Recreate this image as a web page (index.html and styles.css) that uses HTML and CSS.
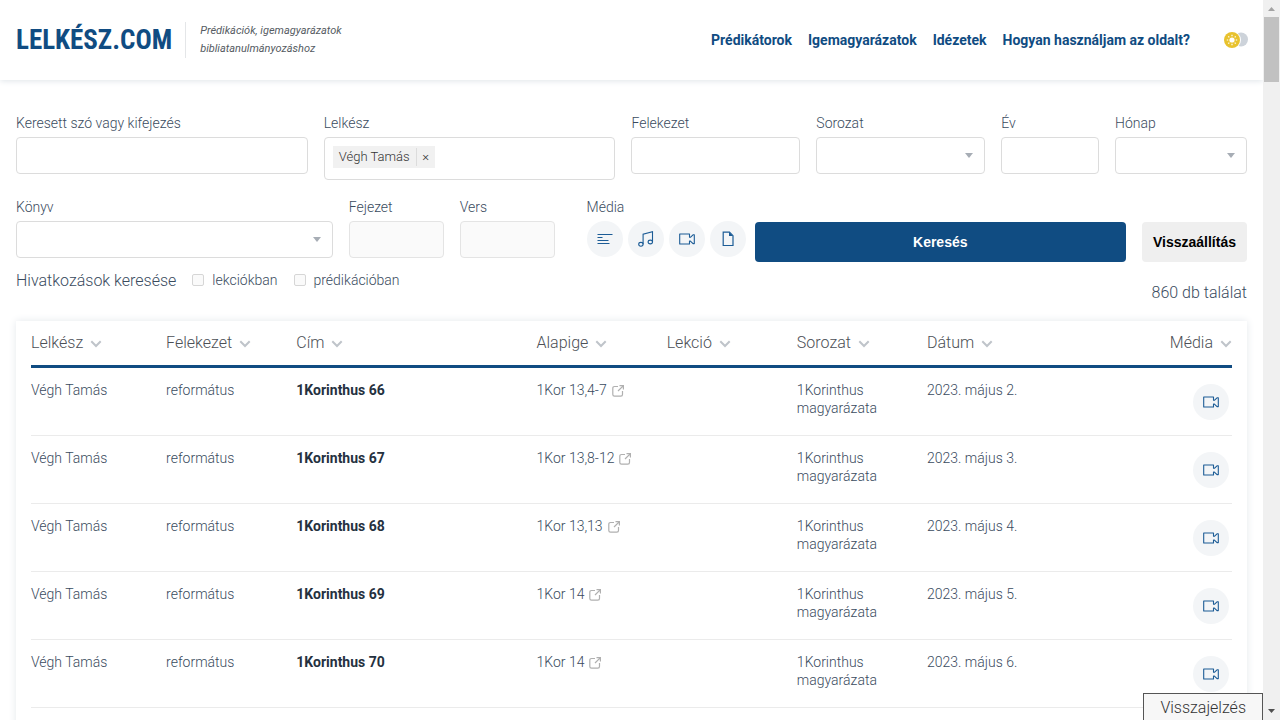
FILE: index.html
```html
<!DOCTYPE html>
<html lang="hu">
<head>
<meta charset="utf-8">
<meta name="viewport" content="width=device-width, initial-scale=1">
<title>Lelkész.com</title>
<link rel="stylesheet" href="styles.css">
</head>
<body>
<svg class="sprite" aria-hidden="true">
  <symbol id="chevron" viewBox="0 0 12 8"><path d="M1.3 1.3 6 6l4.700-4.700" fill="none" stroke="currentColor" stroke-width="2"/></symbol>
  <symbol id="camera" viewBox="0 0 16 12"><path d="M.7 1h9.800v3.300h.9L14 1.800h1.300v8.800H14l-2.600-2.500h-.9V11H.7z" fill="none" stroke="currentColor" stroke-width="1.100" stroke-linejoin="round"/></symbol>
  <symbol id="external" viewBox="0 0 12 12"><path d="M6 1.500H2.500Q.8 1.500.8 3.200v6.300q0 1.700 1.700 1.700h6.300q1.700 0 1.700-1.700V6M7.500.6h3.900v3.900M11.200.8 6 6" fill="none" stroke="currentColor" stroke-width="1.200"/></symbol>
</svg>
<div class="window">
  <div class="page">
    <header class="header">
      <a class="logo" href="#">LELKÉSZ.COM</a>
      <p class="tagline">Prédikációk, igemagyarázatok<br>bibliatanulmányozáshoz</p>
      <nav class="nav">
        <a href="#">Prédikátorok</a>
        <a href="#">Igemagyarázatok</a>
        <a href="#">Idézetek</a>
        <a href="#">Hogyan használjam az oldalt?</a>
      </nav>
      <button class="theme" type="button" aria-label="Téma váltása">
        <svg width="24" height="16" viewBox="0 0 24 16">
          <circle cx="17" cy="7.500" r="7" fill="#cdd3da"/>
          <circle cx="8" cy="8" r="9" fill="#fff"/>
          <circle cx="8" cy="8" r="8" fill="#e8c22e"/>
          <circle cx="8" cy="8" r="2.600" fill="#fff"/>
          <path d="M8 2.800v1.400M8 11.800v1.400M2.800 8h1.400M11.800 8h1.400M4.300 4.300l1 1M10.700 10.700l1 1M11.700 4.300l-1 1M5.300 10.700l-1 1" stroke="#fff" stroke-width="1.200"/>
        </svg>
      </button>
    </header>

    <main class="main">
      <form class="search">
        <div class="fields">
          <div class="field"><label for="term">Keresett szó vagy kifejezés</label><input class="control" id="term" type="text"></div>
          <div class="field"><label for="pastor">Lelkész</label>
            <div class="tags">
              <span class="tag">Végh Tamás<button type="button" aria-label="Végh Tamás törlése">×</button></span>
              <input id="pastor" type="text">
            </div>
          </div>
          <div class="field"><label for="church">Felekezet</label><input class="control" id="church" type="text"></div>
          <div class="field"><label for="series">Sorozat</label><div class="select"><select class="control" id="series"><option></option></select></div></div>
          <div class="field"><label for="year">Év</label><input class="control" id="year" type="text"></div>
          <div class="field"><label for="month">Hónap</label><div class="select"><select class="control" id="month"><option></option></select></div></div>
        </div>

        <div class="second">
          <div class="passage">
            <div class="field"><label for="book">Könyv</label><div class="select"><select class="control" id="book"><option></option></select></div></div>
            <div class="field"><label for="chapter">Fejezet</label><input class="control" id="chapter" type="text" disabled></div>
            <div class="field"><label for="verse">Vers</label><input class="control" id="verse" type="text" disabled></div>
          </div>
          <div class="field" role="group" aria-labelledby="media-label">
            <span class="label" id="media-label">Média</span>
            <div class="media">
              <button class="round" type="button" aria-label="Szöveg"><svg width="16" height="12" viewBox="0 0 16 12"><path d="M.5 1.500h15M.5 4.500h5M.5 7.500h11M.5 10.500h12" stroke="currentColor" stroke-width="1.200"/></svg></button>
              <button class="round" type="button" aria-label="Hang"><svg width="16" height="16" viewBox="0 0 16 16"><g fill="none" stroke="currentColor" stroke-width="1.100"><ellipse cx="2.900" cy="13.300" rx="2.200" ry="1.900"/><ellipse cx="12.300" cy="11" rx="2.200" ry="1.900"/><path d="M5.100 13.300V3.200l9.400-2.500V11"/></g></svg></button>
              <button class="round" type="button" aria-label="Videó"><svg width="16" height="12"><use href="#camera"/></svg></button>
              <button class="round" type="button" aria-label="Dokumentum"><svg width="12" height="16" viewBox="0 0 12 16"><path d="M1.200 1.200h6.300L11 4.700v9.800H1.200z" fill="none" stroke="currentColor" stroke-width="1.200"/><path d="M7 1l4 4H7z" fill="currentColor"/></svg></button>
            </div>
          </div>
          <button class="submit" type="submit">Keresés</button>
          <button class="reset" type="reset">Visszaállítás</button>
        </div>

        <div class="third">
          <span class="refs">Hivatkozások keresése</span>
          <label class="check"><input type="checkbox" disabled>lekciókban</label>
          <label class="check"><input type="checkbox" disabled>prédikációban</label>
          <output class="count">860 db találat</output>
        </div>
      </form>

      <div class="card">
        <table>
          <colgroup><col class="c-pastor"><col class="c-narrow"><col class="c-title"><col class="c-narrow"><col class="c-narrow"><col class="c-narrow"><col class="c-narrow"><col></colgroup>
          <thead>
            <tr>
              <th>Lelkész<svg class="sort"><use href="#chevron"/></svg></th>
              <th>Felekezet<svg class="sort"><use href="#chevron"/></svg></th>
              <th>Cím<svg class="sort"><use href="#chevron"/></svg></th>
              <th>Alapige<svg class="sort"><use href="#chevron"/></svg></th>
              <th>Lekció<svg class="sort"><use href="#chevron"/></svg></th>
              <th>Sorozat<svg class="sort"><use href="#chevron"/></svg></th>
              <th>Dátum<svg class="sort"><use href="#chevron"/></svg></th>
              <th>Média<svg class="sort"><use href="#chevron"/></svg></th>
            </tr>
          </thead>
          <tbody>
            <tr><td>Végh Tamás</td><td>református</td><td><a class="title" href="#">1Korinthus 66</a></td><td><a href="#">1Kor 13,4-7<svg class="ext"><use href="#external"/></svg></a></td><td></td><td>1Korinthus magyarázata</td><td>2023. május 2.</td><td><button class="round" type="button" aria-label="Videó"><svg width="16" height="12"><use href="#camera"/></svg></button></td></tr>
            <tr><td>Végh Tamás</td><td>református</td><td><a class="title" href="#">1Korinthus 67</a></td><td><a href="#">1Kor 13,8-12<svg class="ext"><use href="#external"/></svg></a></td><td></td><td>1Korinthus magyarázata</td><td>2023. május 3.</td><td><button class="round" type="button" aria-label="Videó"><svg width="16" height="12"><use href="#camera"/></svg></button></td></tr>
            <tr><td>Végh Tamás</td><td>református</td><td><a class="title" href="#">1Korinthus 68</a></td><td><a href="#">1Kor 13,13<svg class="ext"><use href="#external"/></svg></a></td><td></td><td>1Korinthus magyarázata</td><td>2023. május 4.</td><td><button class="round" type="button" aria-label="Videó"><svg width="16" height="12"><use href="#camera"/></svg></button></td></tr>
            <tr><td>Végh Tamás</td><td>református</td><td><a class="title" href="#">1Korinthus 69</a></td><td><a href="#">1Kor 14<svg class="ext"><use href="#external"/></svg></a></td><td></td><td>1Korinthus magyarázata</td><td>2023. május 5.</td><td><button class="round" type="button" aria-label="Videó"><svg width="16" height="12"><use href="#camera"/></svg></button></td></tr>
            <tr><td>Végh Tamás</td><td>református</td><td><a class="title" href="#">1Korinthus 70</a></td><td><a href="#">1Kor 14<svg class="ext"><use href="#external"/></svg></a></td><td></td><td>1Korinthus magyarázata</td><td>2023. május 6.</td><td><button class="round" type="button" aria-label="Videó"><svg width="16" height="12"><use href="#camera"/></svg></button></td></tr>
          </tbody>
        </table>
      </div>
    </main>
    <button class="feedback" type="button">Visszajelzés</button>
  </div>
  <div class="scrollbar" aria-hidden="true">
    <svg width="17" height="17" viewBox="0 0 17 17"><path d="M5 11l3.500-4 3.500 4z" fill="#a3a3a3"/></svg>
    <div class="thumb"></div>
    <svg class="down" width="17" height="17" viewBox="0 0 17 17"><path d="M5 6l3.500 4L12 6z" fill="#505050"/></svg>
  </div>
</div>
</body>
</html>
```
FILE: styles.css
```css
* {
  box-sizing: border-box;
}

body {
  margin: 0;
  background: #fff;
  color: #3a4b5e;
  font: 300 14px/18px Roboto, "Liberation Sans", sans-serif;
}

a {
  color: inherit;
  text-decoration: none;
}

button,
input,
select {
  margin: 0;
  font: inherit;
}

button {
  padding: 0;
  border: 0;
  cursor: pointer;
}

.sprite {
  display: none;
}

.window {
  display: flex;
  height: 100vh;
  overflow: hidden;
}

.page {
  position: relative;
  flex: 1;
  min-width: 0;
  overflow: hidden;
}

/* Header */
.header {
  display: flex;
  align-items: center;
  height: 80px;
  padding: 0 16px;
  box-shadow: 0 1px 6px #dfe4e9;
}

.logo {
  color: #104c82;
  font: bold 27px/36px "Roboto Condensed", "Liberation Sans Narrow", Roboto, sans-serif;
}

.tagline {
  margin: 0 0 0 13px;
  padding-left: 14px;
  border-left: 1px solid #e4e6e8;
  color: #555b62;
  font-size: 11px;
  font-style: italic;
  font-weight: 400;
}

.nav {
  display: flex;
  gap: 16px;
  margin-left: auto;
  color: #104c82;
  font-weight: 700;
}

.theme {
  display: flex;
  margin: 0 -1px 0 34px;
  background: none;
}

/* Search form */
.main {
  padding: 34px 16px 0;
}

.fields {
  display: grid;
  grid-template-columns: 292fr 292fr 169fr 169fr 98fr 132fr;
  gap: 16px;
  align-items: start;
}

.field {
  display: grid;
  grid-template-columns: minmax(0, 1fr);
  gap: 5px;
  min-width: 0;
}

.control {
  width: 100%;
  height: 37px;
  padding: 0 8px;
  border: 1px solid #dcdcdc;
  border-radius: 4px;
  background: #fff;
  appearance: none;
}

.control:disabled {
  background: #fafafa;
  border-color: #e4e4e4;
}

.select {
  position: relative;
}

.select::after {
  content: "";
  position: absolute;
  top: 16px;
  right: 12px;
  border: 4px solid transparent;
  border-top: 5px solid #a7adb5;
  border-bottom: 0;
}

.tags {
  display: flex;
  align-items: flex-start;
  height: 43px;
  padding: 8px;
  border: 1px solid #dcdcdc;
  border-radius: 4px;
}

.tags input {
  flex: 1;
  min-width: 0;
  border: 0;
}

.tag {
  display: flex;
  align-items: center;
  height: 22px;
  padding-left: 6px;
  background: #f1f1f1;
  color: #333;
  font-size: 13px;
  white-space: nowrap;
}

.tag button {
  width: 19px;
  margin-left: 6px;
  border-left: 1px solid #dcdcdc;
  background: none;
  color: #333;
}

.second {
  display: flex;
  align-items: flex-end;
  margin-top: 18px;
}

.passage {
  display: grid;
  flex: 538 1 0;
  grid-template-columns: 317fr 95fr 95fr;
  gap: 16px;
  margin-right: 32px;
}

.media {
  display: flex;
  gap: 5px;
  height: 37px;
}

.round {
  display: inline-flex;
  align-items: center;
  justify-content: center;
  width: 36px;
  height: 36px;
  border-radius: 50%;
  background: #f3f5f7;
  color: #1c5c96;
}

.submit,
.reset {
  height: 40px;
  margin-bottom: -4px;
  border-radius: 4px;
  font: bold 14px/18px "Liberation Sans", sans-serif;
}

.submit {
  flex: 371 1 0;
  margin-left: 9px;
  background: #104c82;
  color: #fff;
}

.reset {
  margin-left: 16px;
  padding: 0 11px;
  background: #efefef;
  color: #000;
}

.third {
  display: flex;
  align-items: flex-start;
  margin-top: 13px;
}

.refs,
.count {
  font-size: 16px;
  line-height: 20px;
}

.check {
  display: flex;
  gap: 8px;
  align-items: center;
  margin-left: 16px;
}

.check input {
  width: 12px;
  height: 12px;
  border: 1px solid #d6d6d6;
  border-radius: 2px;
  background: #fafafa;
  appearance: none;
}

.count {
  margin: 12px 0 0 auto;
}

/* Results */
.card {
  margin-top: 18px;
  padding: 0 15px 40px;
  box-shadow: 0 0 8px #e4e8ec;
}

table {
  width: 100%;
  border-collapse: separate;
  border-spacing: 0;
  table-layout: fixed;
}

.c-pastor {
  width: 11.25%;
}

.c-narrow {
  width: 10.84%;
}

.c-title {
  width: 20%;
}

th {
  height: 47px;
  padding: 0;
  border-bottom: 3px solid #104c82;
  color: #4c5056;
  font-size: 16px;
  font-weight: 300;
  text-align: left;
  white-space: nowrap;
}

td {
  height: 68px;
  padding: 13px 0 0;
  border-bottom: 1px solid #ebebeb;
  vertical-align: top;
}

th:last-child {
  text-align: right;
}

td:last-child {
  padding: 0 3px 0 0;
  line-height: 0;
  text-align: right;
  vertical-align: middle;
}

.sort {
  width: 12px;
  height: 8px;
  margin-left: 7px;
  color: #bfc4ca;
}

.ext {
  width: 12px;
  height: 12px;
  margin-left: 5px;
  color: #b0b0b0;
  vertical-align: -2px;
}

.title {
  color: #25313f;
  font-weight: 700;
}

.feedback {
  position: absolute;
  right: 0;
  bottom: -3px;
  padding: 4px 16px;
  border: 1px solid #555;
  background: #f7f7f7;
  color: #333;
  font-size: 16px;
  line-height: 20px;
}

/* Scrollbar */
.scrollbar {
  display: flex;
  flex-direction: column;
  width: 17px;
  background: #f0f0f0;
}

.thumb {
  height: 65px;
  margin: 0 1px;
  background: #c1c1c1;
}

.down {
  margin-top: auto;
}
```
